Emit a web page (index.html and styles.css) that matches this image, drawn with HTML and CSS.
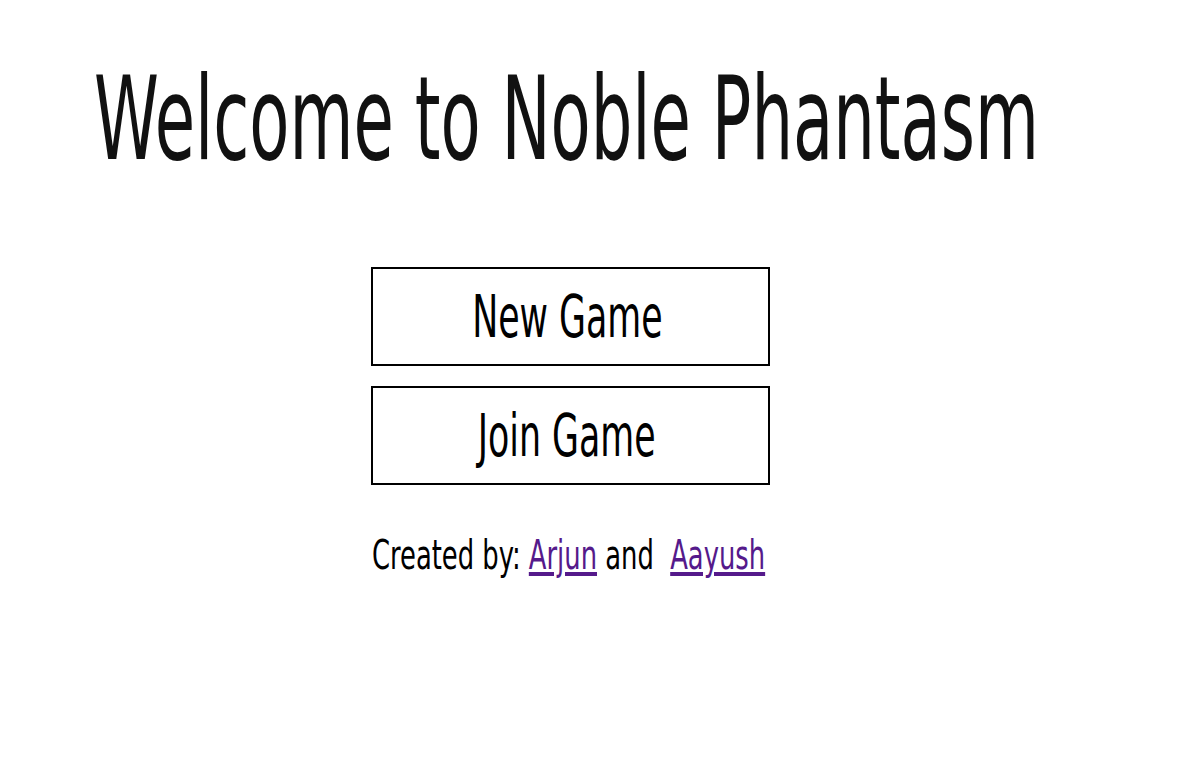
FILE: index.html
```html
<!DOCTYPE html>
<html>
<head>
<meta charset="utf-8">
<link rel="stylesheet" href="styles.css">
</head>
<body>
<div class="page">
  <h1 class="title"><span class="squeeze">Welcome to Noble Phantasm</span></h1>
  <div class="menu">
    <button class="btn"><span class="squeeze">New Game</span></button>
    <button class="btn"><span class="squeeze">Join Game</span></button>
    <p class="credits"><span class="squeeze">Created by: <a href="#a">Arjun</a> and&nbsp; <a href="#b">Aayush</a></span></p>
  </div>
</div>
</body>
</html>
```
FILE: styles.css
```css
html, body {
  margin: 0;
  padding: 0;
  background: #fff;
}
.page {
  font-family: "DejaVu Sans Condensed", "DejaVu Sans", sans-serif;
  font-stretch: condensed;
  padding: 59px 0 0 97px;
}
.squeeze {
  display: inline-block;
  white-space: nowrap;
}
.title {
  margin: 0 0 0 -3px;
  font-size: 116px;
  font-weight: normal;
  color: #111;
  line-height: 120px;
  white-space: nowrap;
}
.title .squeeze {
  width: 940px;
  transform: scaleX(0.629);
  transform-origin: 0 50%;
}
.menu {
  display: flex;
  flex-direction: column;
  gap: 20px;
  margin: 88px 0 0 274px;
  width: 399px;
}
.btn {
  box-sizing: border-box;
  width: 399px;
  height: 99px;
  border: 2px solid #000;
  background: #fff;
  font-family: inherit;
  font-stretch: condensed;
  font-size: 59px;
  color: #000;
  padding: 0;
  white-space: nowrap;
}
.btn .squeeze {
  transform: scaleX(0.655);
  transform-origin: 50% 50%;
  margin-left: -7px;
}
.credits {
  margin: 26px 0 0 1px;
  font-size: 41px;
  line-height: 48px;
  color: #000;
  white-space: nowrap;
}
.credits .squeeze {
  transform: scaleX(0.70);
  transform-origin: 0 50%;
}
.credits a {
  color: #551a8b;
}
```
